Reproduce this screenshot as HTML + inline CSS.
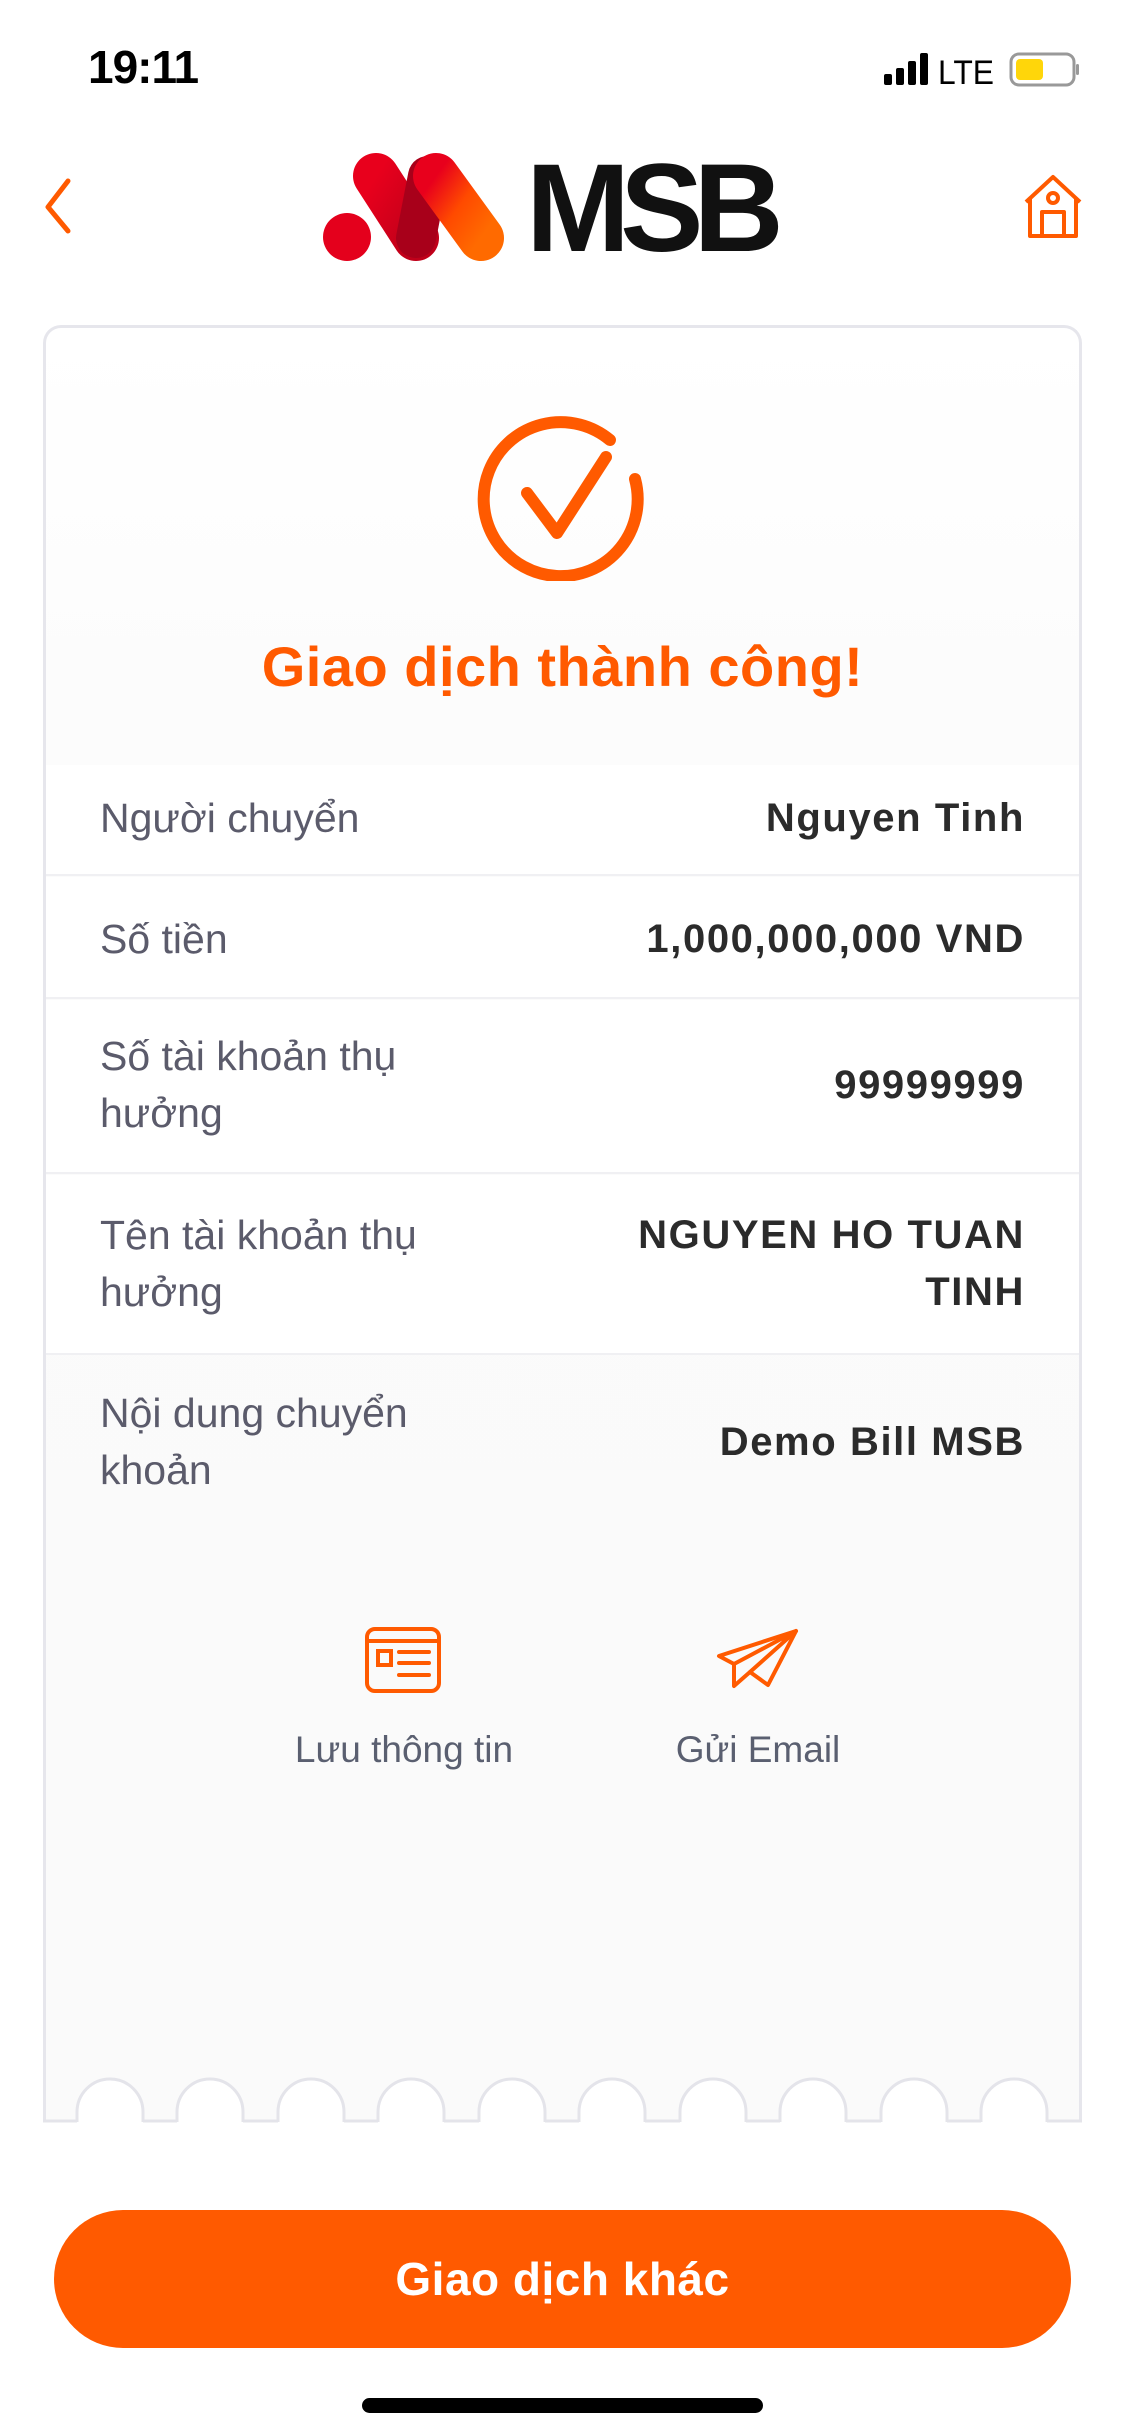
<!DOCTYPE html>
<html><head><meta charset="utf-8"><style>
*{margin:0;padding:0;box-sizing:border-box}
body{width:1125px;height:2436px;background:#fff;position:relative;overflow:hidden;font-family:"Liberation Sans",sans-serif}
.abs{position:absolute}
.card{left:43px;top:325px;width:1039px;height:1797px;border:3px solid #e6e6ec;border-bottom:none;border-radius:18px 18px 0 0;background:linear-gradient(#fff 0,#fbfbfb 500px,#fafafa)}
.row{position:absolute;left:0;width:1033px;background:#fff;border-bottom:2px solid #f0f0f3}
.lbl{position:absolute;left:54px;color:#5b5b6b;font-size:41px;line-height:57px}
.val{position:absolute;right:54px;color:#2b2b2b;font-size:40px;line-height:57px;font-weight:bold;text-align:right;letter-spacing:1.6px}
.cap{color:#5a5f70;font-size:37px;text-align:center;width:300px}
</style></head><body>
<div class="abs" style="left:88px;top:40px;font-size:46px;font-weight:bold;color:#000;letter-spacing:-1px">19:11</div>
<svg class="abs" style="left:880px;top:50px" width="200" height="40" viewBox="0 0 200 40">
<rect x="4" y="24" width="8" height="11" rx="2"/><rect x="16" y="18" width="8" height="17" rx="2"/><rect x="28" y="11" width="8" height="24" rx="2"/><rect x="40" y="3" width="8" height="32" rx="2"/>
<text x="58" y="34" font-family="Liberation Sans" font-size="34" fill="#000" textLength="56" lengthAdjust="spacingAndGlyphs">LTE</text>
<rect x="131" y="4" width="63" height="31" rx="8" fill="none" stroke="#999" stroke-width="3"/>
<rect x="136" y="9" width="27" height="21" rx="4" fill="#ffd60a"/>
<rect x="196" y="14" width="3" height="11" rx="1.5" fill="#999"/>
</svg>
<svg class="abs" style="left:38px;top:175px" width="40" height="62" viewBox="0 0 40 62"><path d="M30 6 L10 32 L30 56" fill="none" stroke="#ff5a00" stroke-width="5" stroke-linecap="round" stroke-linejoin="round"/></svg>
<svg class="abs" style="left:318px;top:148px" width="200" height="120" viewBox="318 148 200 120">
<defs><linearGradient id="g1" x1="0" y1="0" x2="1" y2="1"><stop offset="0" stop-color="#e8001c"/><stop offset="1" stop-color="#c0001a"/></linearGradient>
<linearGradient id="g2" x1="0" y1="0" x2="1" y2="1"><stop offset="0" stop-color="#e8001c"/><stop offset=".5" stop-color="#ff4a00"/><stop offset="1" stop-color="#ff6a00"/></linearGradient></defs>
<circle cx="347" cy="237" r="24" fill="#e4001c"/>
<line x1="376" y1="176" x2="416" y2="238" stroke="url(#g1)" stroke-width="46" stroke-linecap="round"/>
<line x1="416" y1="238" x2="428" y2="176" stroke="#a8001a" stroke-width="40" stroke-linecap="round"/>
<line x1="436" y1="176" x2="481" y2="238" stroke="url(#g2)" stroke-width="46" stroke-linecap="round"/>
</svg>
<div class="abs" style="left:526px;top:139px;font-size:125px;font-weight:bold;color:#111;letter-spacing:-10px;line-height:140px">MSB</div>
<svg class="abs" style="left:1020px;top:174px" width="66" height="66" viewBox="0 0 66 66"><g fill="none" stroke="#ff5a00" stroke-width="4" stroke-linejoin="round"><path d="M6 28 L33 3 L60 28 M10 25 V62 H56 V25"/><circle cx="33" cy="24" r="5"/><path d="M22 62 V38 H44 V62"/></g></svg>
<div class="abs card">
 <svg class="abs" style="left:427px;top:73px" width="180" height="180" viewBox="0 0 180 180"><g fill="none" stroke="#ff5a00" stroke-width="12" stroke-linecap="round" stroke-linejoin="round"><path d="M137 39 A77 77 0 1 0 162 78"/><path d="M54 92 L84 132 L133 56"/></g></svg>
 <div class="abs" style="left:0;width:1033px;top:306px;text-align:center;color:#ff5a00;font-size:56px;font-weight:bold;letter-spacing:0.5px">Giao dịch thành công!</div>
 <div class="row" style="top:437px;height:111px"><div class="lbl" style="top:25px">Người chuyển</div><div class="val" style="top:25px">Nguyen Tinh</div></div>
 <div class="row" style="top:549px;height:122px"><div class="lbl" style="top:34px">Số tiền</div><div class="val" style="top:34px">1,000,000,000 VND</div></div>
 <div class="row" style="top:672px;height:174px"><div class="lbl" style="top:28px">Số tài khoản thụ<br>hưởng</div><div class="val" style="top:57px">99999999</div></div>
 <div class="row" style="top:847px;height:180px"><div class="lbl" style="top:32px">Tên tài khoản thụ<br>hưởng</div><div class="val" style="top:32px">NGUYEN HO TUAN<br>TINH</div></div>
 <div class="lbl" style="top:1057px">Nội dung chuyển<br>khoản</div><div class="val" style="top:1086px">Demo Bill MSB</div>
 <svg class="abs" style="left:317px;top:1297px" width="80" height="70" viewBox="0 0 80 70"><g fill="none" stroke="#ff5a00" stroke-width="4" stroke-linecap="round"><rect x="4" y="4" width="72" height="62" rx="8"/><path d="M4 16 H76"/><rect x="15" y="26" width="13" height="14"/><path d="M36 27 H66 M36 38 H66 M36 50 H66"/></g></svg>
 <svg class="abs" style="left:670px;top:1300px" width="84" height="62" viewBox="0 0 84 62"><g fill="none" stroke="#ff5a00" stroke-width="4" stroke-linejoin="round" stroke-linecap="round"><path d="M3 28 L80 3 L52 57 L34 44 L18 58 L18 36 Z"/><path d="M18 36 L80 3 M34 44 L80 3"/></g></svg>
 <div class="abs cap" style="left:208px;top:1401px">Lưu thông tin</div>
 <div class="abs cap" style="left:562px;top:1401px">Gửi Email</div>
</div>
<svg class="abs" style="left:40px;top:2070px" width="1045" height="56" viewBox="40 2070 1045 56">
<g fill="#fff" stroke="#e4e4ea" stroke-width="3">
<path d="M77 2122 V2112 A33 33 0 0 1 143 2112 V2122"/><path d="M177 2122 V2112 A33 33 0 0 1 243 2112 V2122"/><path d="M278 2122 V2112 A33 33 0 0 1 344 2112 V2122"/><path d="M378 2122 V2112 A33 33 0 0 1 444 2112 V2122"/><path d="M479 2122 V2112 A33 33 0 0 1 545 2112 V2122"/><path d="M579 2122 V2112 A33 33 0 0 1 645 2112 V2122"/><path d="M680 2122 V2112 A33 33 0 0 1 746 2112 V2122"/><path d="M780 2122 V2112 A33 33 0 0 1 846 2112 V2122"/><path d="M881 2122 V2112 A33 33 0 0 1 947 2112 V2122"/><path d="M981 2122 V2112 A33 33 0 0 1 1047 2112 V2122"/>
</g>
<path d="M43 2121 H77 M143 2121 H177 M243 2121 H278 M344 2121 H378 M444 2121 H479 M545 2121 H579 M645 2121 H680 M746 2121 H780 M846 2121 H881 M947 2121 H981 M1047 2121 H1082" stroke="#e4e4ea" stroke-width="3"/>
</svg>
<div class="abs" style="left:54px;top:2210px;width:1017px;height:138px;border-radius:69px;background:#ff5a00;color:#fff;font-size:46px;font-weight:bold;text-align:center;line-height:138px;letter-spacing:0.5px">Giao dịch khác</div>
<div class="abs" style="left:362px;top:2398px;width:401px;height:15px;border-radius:8px;background:#000"></div>
</body></html>
